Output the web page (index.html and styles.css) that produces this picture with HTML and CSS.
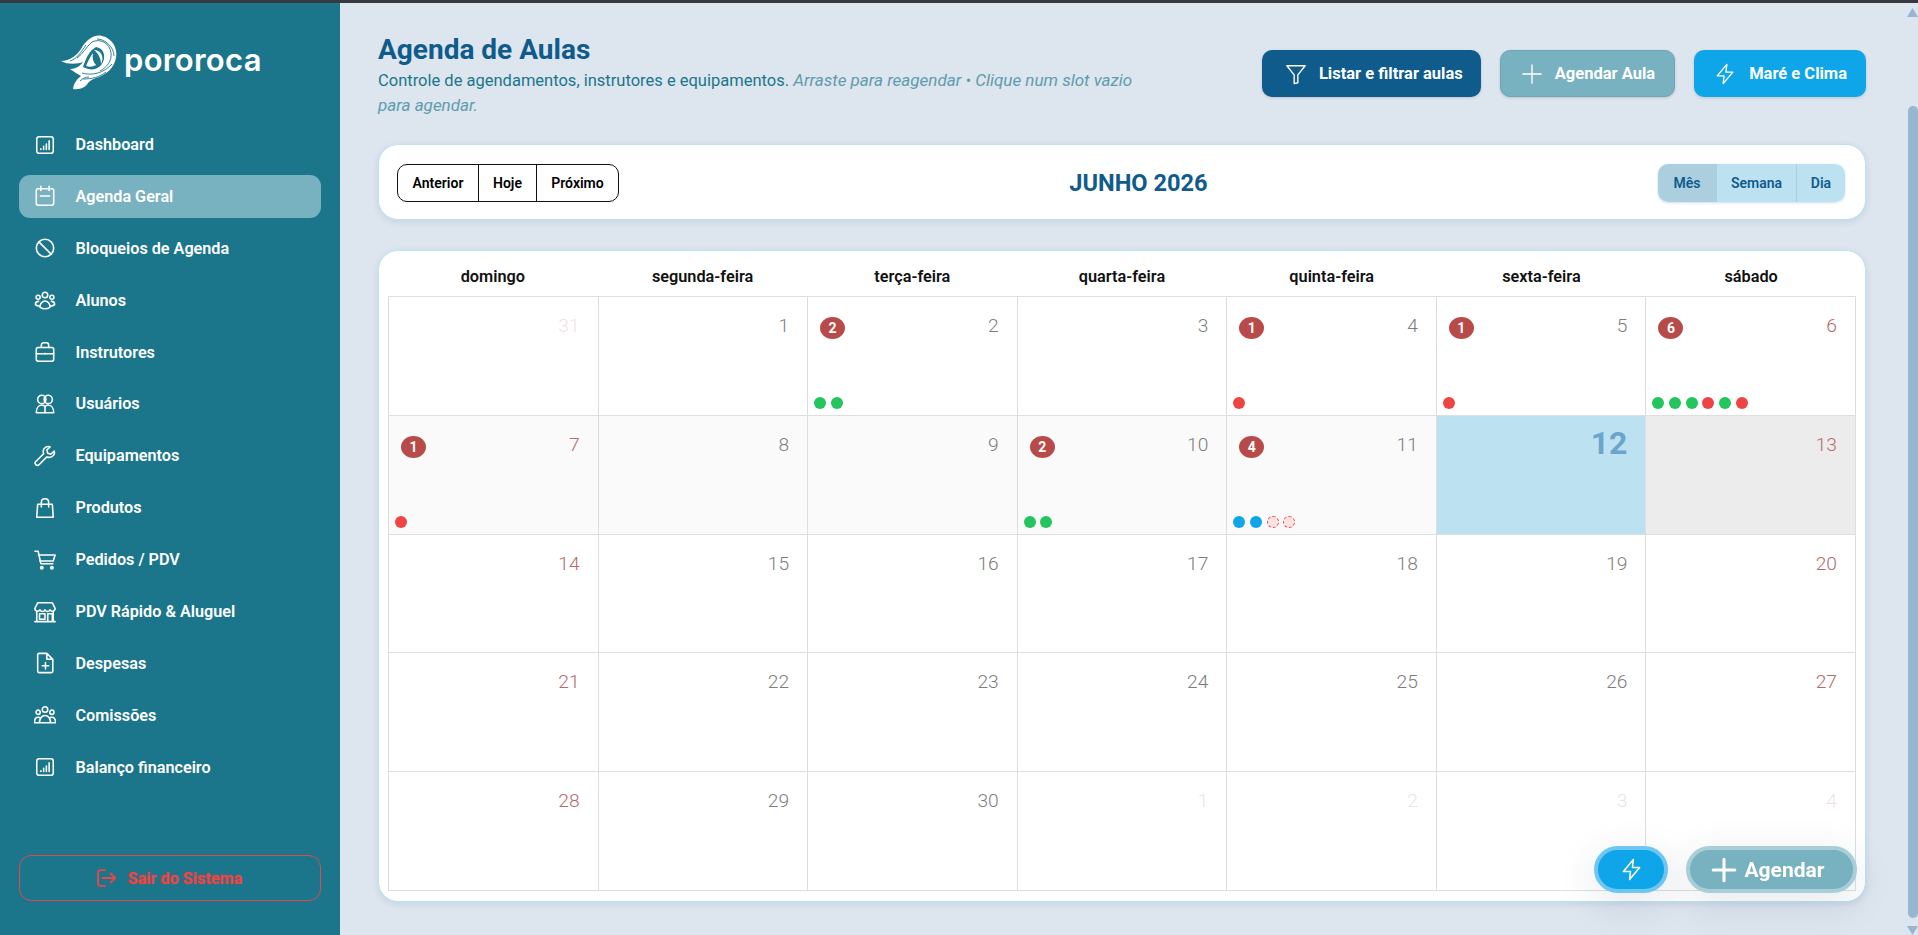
FILE: index.html
```html
<!DOCTYPE html>
<html>
<head>
  <meta charset="UTF-8">
  <title>Agenda de Aulas</title>
  <link rel="stylesheet" href="styles.css">
</head>
<body>
  <div class="top-line"></div>
  <div class="app">
    <aside class="sidebar">
      <div class="logo">
        <svg class="logo-mark" viewBox="0 0 90 75">
          <path d="M11 36C20 36 27 30 31 24C36 15 44 9 52 11C62 13 68 23 66 33C64 43 56 50 46 53C42 54 40 56 38 58C36 62 30 65 23 64C24 58 27 54 31 51C28 49 24 47 20 44C26 44 30 41 33 37C28 39 18 40 11 36Z"/>
          <path class="logo-cut" d="M33 42C36 33 39 26 46 22C53 23 56 30 53 37C51 41 48 43 45 44C41 45 37 44 33 42Z"/>
          <path d="M36 41C38 36 40 32 43 28C42 33 43 37 46 40C43 42 39 42 36 41Z"/>
          <path d="M44 25C50 25 55 31 51 39C51 34 49 29 44 25Z"/>
          <path class="logo-line" d="M42 17C50 13 60 18 61 28C62 36 57 42 50 46"/>
          <path class="logo-line" d="M47 14C55 14 64 22 64 31"/>
          <path class="logo-line" d="M27 33C33 29 36 22 42 17"/>
          <path class="logo-line" d="M20 36C27 34 31 27 36 20"/>
          <path class="logo-line" d="M32 48C42 51 54 48 62 39"/>
          <path class="logo-line" d="M33 54C42 54 50 52 56 47"/>
          <path class="logo-line" d="M30 56C33 53 36 52 39 52"/>
        </svg>
        <span class="logo-text">pororoca</span>
      </div>

      <nav class="nav">
        <a class="nav-item">
          <svg class="nav-icon" viewBox="0 0 24 24"><rect x="3" y="3" width="18" height="18" rx="2.5"/><path d="M7.500 17v-1M10.500 17v-3.500M13.500 17v-6M16.500 17V7.500"/></svg>
          Dashboard
        </a>
        <a class="nav-item active">
          <svg class="nav-icon" viewBox="0 0 24 24"><rect x="2.500" y="4" width="19" height="18" rx="2"/><path d="M7.500 1.500V6M16.500 1.500V6M7 12h10"/></svg>
          Agenda Geral
        </a>
        <a class="nav-item">
          <svg class="nav-icon" viewBox="0 0 24 24"><circle cx="12" cy="12" r="9.500"/><path d="M5.300 5.300l13.400 13.400"/></svg>
          Bloqueios de Agenda
        </a>
        <a class="nav-item">
          <svg class="nav-icon" viewBox="0 0 24 24"><circle cx="12" cy="6.500" r="3"/><circle cx="4.500" cy="9" r="2.200"/><circle cx="19.500" cy="9" r="2.200"/><path d="M6.500 20c0-4 2.500-7 5.500-7s5.500 3 5.500 7c-3.500 2-7.500 2-11 0z"/><path d="M5 13.500c-2 0-3.500 1.500-3.500 3.500 1 1 2.500 1.500 4 1.500M19 13.500c2 0 3.500 1.500 3.500 3.500-1 1-2.500 1.500-4 1.500"/></svg>
          Alunos
        </a>
        <a class="nav-item">
          <svg class="nav-icon" viewBox="0 0 24 24"><rect x="2.500" y="7" width="19" height="15" rx="2"/><path d="M8 7V4.500C8 3 9 2 10.500 2h3C15 2 16 3 16 4.500V7M2.500 14h19M12 13.500v1"/></svg>
          Instrutores
        </a>
        <a class="nav-item">
          <svg class="nav-icon" viewBox="0 0 24 24"><circle cx="8.500" cy="7" r="4.500"/><circle cx="15.500" cy="7" r="4.500"/><path d="M2.500 21.500c0-5 2.500-8.500 6-8.500 2 0 3.500 1 3.500 3 0-2 1.500-3 3.500-3 3.500 0 6 3.500 6 8.500zM12 16v5.500"/></svg>
          Usuários
        </a>
        <a class="nav-item">
          <svg class="nav-icon" viewBox="0 0 24 24"><path d="M22 6.500l-3.500 3.500-3.500-1-1-3.500L17.500 2C14 .8 10 3 10 7c0 1 .2 1.800.5 2.500L2 18c-1 1-1 2.500 0 3.500s2.500 1 3.500 0l8.500-8.500c.8.300 1.600.5 2.500.5 4 0 6.800-3.500 5.500-7z"/></svg>
          Equipamentos
        </a>
        <a class="nav-item">
          <svg class="nav-icon" viewBox="0 0 24 24"><path d="M4 8h16l1 14H3zM8 11V6c0-2.500 1.500-4 4-4s4 1.500 4 4v5"/></svg>
          Produtos
        </a>
        <a class="nav-item">
          <svg class="nav-icon" viewBox="0 0 24 24"><path d="M1 2.500h3.500L7.500 16h13M5 6.500h18L21 13H6.300"/><circle cx="8.500" cy="20.500" r="1.300"/><circle cx="19.500" cy="20.500" r="1.300"/></svg>
          Pedidos / PDV
        </a>
        <a class="nav-item">
          <svg class="nav-icon" viewBox="0 0 24 24"><path d="M1 22.500h22M3 22.500V12M21 22.500V12M4 2h16l3 6c0 4-4.500 4-5.500 1.500C16.500 12 13 12 12 9.500 11 12 7.500 12 6.500 9.500 5.500 12 1 12 1 8z"/><rect x="6" y="14" width="6" height="6"/><path d="M15 22V14h5v8"/></svg>
          PDV Rápido &amp; Aluguel
        </a>
        <a class="nav-item">
          <svg class="nav-icon" viewBox="0 0 24 24"><path d="M5.500 1.500H14L20.500 8v13c0 1-.8 1.500-1.500 1.500H5.500C4.700 22.500 4 22 4 21V3c0-1 .7-1.500 1.500-1.500zM14 1.500V8h6.500M12.500 11.500v7M9 15h7"/></svg>
          Despesas
        </a>
        <a class="nav-item">
          <svg class="nav-icon" viewBox="0 0 24 24"><circle cx="12" cy="6" r="3"/><circle cx="4.500" cy="9" r="2.300"/><circle cx="19.500" cy="9" r="2.300"/><path d="M6 20.500c0-4.500 2.500-8 6-8s6 3.500 6 8M.5 20.500c0-3.500 1.500-6 4-6 1 0 2 .3 2.500 1M23.500 20.500c0-3.500-1.500-6-4-6-1 0-2 .3-2.500 1M.5 20.500h23"/></svg>
          Comissões
        </a>
        <a class="nav-item">
          <svg class="nav-icon" viewBox="0 0 24 24"><rect x="3" y="3" width="18" height="18" rx="2.500"/><path d="M7.500 17v-1M10.500 17v-3.500M13.500 17v-6M16.500 17V7.500"/></svg>
          Balanço financeiro
        </a>
      </nav>

      <a class="logout">
        <svg class="logout-icon" viewBox="0 0 24 24"><path d="M11 2.500H5C3.500 2.500 2.500 3.500 2.500 5v14c0 1.500 1 2.500 2.500 2.500h6M8 12h15M17.500 6.500L23 12l-5.500 5.500"/></svg>
        Sair do Sistema
      </a>
    </aside>

    <main class="main">
      <header class="page-header">
        <div class="page-title">
          <h1>Agenda de Aulas</h1>
          <p>Controle de agendamentos, instrutores e equipamentos. <em>Arraste para reagendar • Clique num slot vazio para agendar.</em></p>
        </div>
        <div class="page-actions">
          <button class="action-btn btn-list">
            <svg class="btn-icon" viewBox="0 0 24 24"><path d="M2 3h20l-8 10v8.500l-4 1V13z"/></svg>
            Listar e filtrar aulas
          </button>
          <button class="action-btn btn-new">
            <svg class="btn-icon" viewBox="0 0 24 24"><path d="M12 2v20M2 12h20"/></svg>
            Agendar Aula
          </button>
          <button class="action-btn btn-tide">
            <svg class="btn-icon" viewBox="0 0 24 24"><path d="M14 1.500L3.500 14H11l-1 8.500L20.500 10H13z"/></svg>
            Maré e Clima
          </button>
        </div>
      </header>

      <section class="toolbar">
        <div class="btn-group nav-group">
          <button class="anterior">Anterior</button>
          <button class="hoje">Hoje</button>
          <button class="proximo">Próximo</button>
        </div>
        <h2 class="month-title">JUNHO 2026</h2>
        <div class="btn-group view-group">
          <button class="view-mes">Mês</button>
          <button class="view-semana">Semana</button>
          <button class="view-dia">Dia</button>
        </div>
      </section>

      <section class="calendar">
        <div class="week-head">
          <div>domingo</div>
          <div>segunda-feira</div>
          <div>terça-feira</div>
          <div>quarta-feira</div>
          <div>quinta-feira</div>
          <div>sexta-feira</div>
          <div>sábado</div>
        </div>
        <div class="month-grid">
          <div class="day weekend off"><div class="day-top"><span></span><span class="num">31</span></div></div>
          <div class="day"><div class="day-top"><span></span><span class="num">1</span></div></div>
          <div class="day">
            <div class="day-top"><span class="badge">2</span><span class="num">2</span></div>
            <div class="dots"><i class="dot green"></i><i class="dot green"></i></div>
          </div>
          <div class="day"><div class="day-top"><span></span><span class="num">3</span></div></div>
          <div class="day">
            <div class="day-top"><span class="badge">1</span><span class="num">4</span></div>
            <div class="dots"><i class="dot red"></i></div>
          </div>
          <div class="day">
            <div class="day-top"><span class="badge">1</span><span class="num">5</span></div>
            <div class="dots"><i class="dot red"></i></div>
          </div>
          <div class="day weekend">
            <div class="day-top"><span class="badge">6</span><span class="num">6</span></div>
            <div class="dots"><i class="dot green"></i><i class="dot green"></i><i class="dot green"></i><i class="dot red"></i><i class="dot green"></i><i class="dot red"></i></div>
          </div>

          <div class="day weekend past">
            <div class="day-top"><span class="badge">1</span><span class="num">7</span></div>
            <div class="dots"><i class="dot red"></i></div>
          </div>
          <div class="day past"><div class="day-top"><span></span><span class="num">8</span></div></div>
          <div class="day past"><div class="day-top"><span></span><span class="num">9</span></div></div>
          <div class="day past">
            <div class="day-top"><span class="badge">2</span><span class="num">10</span></div>
            <div class="dots"><i class="dot green"></i><i class="dot green"></i></div>
          </div>
          <div class="day past">
            <div class="day-top"><span class="badge">4</span><span class="num">11</span></div>
            <div class="dots"><i class="dot blue"></i><i class="dot blue"></i><i class="dot canceled"></i><i class="dot canceled"></i></div>
          </div>
          <div class="day today"><div class="day-top"><span></span><span class="num">12</span></div></div>
          <div class="day weekend closed"><div class="day-top"><span></span><span class="num">13</span></div></div>

          <div class="day weekend"><div class="day-top"><span></span><span class="num">14</span></div></div>
          <div class="day"><div class="day-top"><span></span><span class="num">15</span></div></div>
          <div class="day"><div class="day-top"><span></span><span class="num">16</span></div></div>
          <div class="day"><div class="day-top"><span></span><span class="num">17</span></div></div>
          <div class="day"><div class="day-top"><span></span><span class="num">18</span></div></div>
          <div class="day"><div class="day-top"><span></span><span class="num">19</span></div></div>
          <div class="day weekend"><div class="day-top"><span></span><span class="num">20</span></div></div>

          <div class="day weekend"><div class="day-top"><span></span><span class="num">21</span></div></div>
          <div class="day"><div class="day-top"><span></span><span class="num">22</span></div></div>
          <div class="day"><div class="day-top"><span></span><span class="num">23</span></div></div>
          <div class="day"><div class="day-top"><span></span><span class="num">24</span></div></div>
          <div class="day"><div class="day-top"><span></span><span class="num">25</span></div></div>
          <div class="day"><div class="day-top"><span></span><span class="num">26</span></div></div>
          <div class="day weekend"><div class="day-top"><span></span><span class="num">27</span></div></div>

          <div class="day weekend"><div class="day-top"><span></span><span class="num">28</span></div></div>
          <div class="day"><div class="day-top"><span></span><span class="num">29</span></div></div>
          <div class="day"><div class="day-top"><span></span><span class="num">30</span></div></div>
          <div class="day off"><div class="day-top"><span></span><span class="num">1</span></div></div>
          <div class="day off"><div class="day-top"><span></span><span class="num">2</span></div></div>
          <div class="day off"><div class="day-top"><span></span><span class="num">3</span></div></div>
          <div class="day weekend off"><div class="day-top"><span></span><span class="num">4</span></div></div>
        </div>
      </section>
    </main>

    <div class="scrollbar">
      <div class="arrow-up"></div>
      <div class="thumb"></div>
      <div class="arrow-down"></div>
    </div>
  </div>

  <div class="fab-row">
    <button class="fab fab-tide">
      <svg class="fab-bolt" viewBox="0 0 24 24"><path d="M14 1.500L3.500 14H11l-1 8.500L20.500 10H13z"/></svg>
    </button>
    <button class="fab fab-new">
      <svg class="fab-plus" viewBox="0 0 24 24"><path d="M12 2v20M2 12h20"/></svg>
      Agendar
    </button>
  </div>
</body>
</html>
```

FILE: styles.css
```css
* {
  box-sizing: border-box;
}

html, body {
  height: 100%;
}

body {
  margin: 0;
  font-family: Roboto, Arial, sans-serif;
  background-color: #dde5ee;
  color: #000;
  overflow: hidden;
}

button {
  font-family: inherit;
  cursor: pointer;
}

.top-line {
  height: 3px;
  background-color: #36393f;
}

.app {
  display: flex;
  height: calc(100vh - 3px);
}

/* Sidebar */
.sidebar {
  width: 340px;
  flex-shrink: 0;
  display: flex;
  flex-direction: column;
  background-color: #1b768c;
  color: #fff;
  padding: 0 19px 34px;
}

.logo {
  display: flex;
  align-items: flex-start;
  height: 120px;
  padding: 22px 0 0 31px;
}

.logo-mark {
  width: 90px;
  height: 75px;
  fill: #fff;
  margin-right: -16px;
}

.logo-cut {
  fill: #1b768c;
}

.logo-line {
  fill: none;
  stroke: #1b768c;
  stroke-width: 0.9;
}

.logo-text {
  font-family: Inter, Arial, sans-serif;
  font-weight: 600;
  font-size: 31px;
  letter-spacing: 0.3px;
  line-height: 36px;
  margin-top: 17px;
}

.nav {
  display: flex;
  flex-direction: column;
  gap: 8.900px;
}

.nav-item {
  display: flex;
  align-items: center;
  gap: 19.500px;
  height: 43px;
  padding-left: 15px;
  border-radius: 11px;
  font-size: 16.200px;
  font-weight: 600;
}

.nav-item.active {
  background-color: #78b1bf;
}

.nav-icon {
  width: 22px;
  height: 22px;
  flex-shrink: 0;
  fill: none;
  stroke: #fff;
  stroke-width: 1.700;
  stroke-linecap: round;
  stroke-linejoin: round;
}

.logout {
  margin-top: auto;
  display: flex;
  align-items: center;
  justify-content: center;
  gap: 12px;
  height: 46px;
  padding-right: 2px;
  border: 1px solid #dc4a4e;
  border-radius: 12px;
  color: #ef4444;
  font-size: 16.200px;
  font-weight: 700;
  text-shadow: 0 0 2px rgba(239, 68, 68, 0.5);
}

.logout-icon {
  width: 20px;
  height: 20px;
  fill: none;
  stroke: #ef4444;
  stroke-width: 2.200;
  stroke-linecap: round;
  stroke-linejoin: round;
}

/* Main area */
.main {
  flex: 1;
  min-width: 0;
  padding: 31px 41px 0 38px;
  overflow: hidden;
}

.page-header {
  display: flex;
  justify-content: space-between;
  height: 110px;
}

.page-title {
  width: 770px;
}

.page-title h1 {
  margin: 0 0 2px;
  font-size: 28px;
  font-weight: 700;
  line-height: 32px;
  color: #0e5b8c;
}

.page-title p {
  margin: 0;
  font-size: 16.500px;
  line-height: 24px;
  color: #1b768c;
}

.page-title em {
  font-size: 17px;
  color: #5d9cad;
}

.page-actions {
  display: flex;
  gap: 19px;
  padding-top: 16px;
}

.action-btn {
  display: flex;
  align-items: center;
  height: 47px;
  border: none;
  border-radius: 10px;
  padding: 0 19px 0 20px;
  gap: 12px;
  color: #fff;
  font-size: 16.500px;
  font-weight: 700;
  box-shadow: 0 1px 3px rgba(0, 0, 0, 0.15);
}

.btn-icon {
  width: 22px;
  height: 22px;
  fill: none;
  stroke: #fff;
  stroke-width: 1.500;
  stroke-linejoin: round;
  stroke-linecap: round;
}

.btn-list {
  background-color: #0e5b8c;
  padding: 0 18px 0 23px;
}

.btn-new {
  background-color: #78b1bf;
  border: 1px solid #6fa6b4;
}

.btn-tide {
  background-color: #0ea5e9;
  gap: 13px;
}

.toolbar {
  display: flex;
  align-items: center;
  justify-content: space-between;
  height: 76px;
  padding: 2px 20px 0 18px;
  background-color: #fff;
  border: 1px solid #bde3f2;
  border-radius: 20px;
  box-shadow: 0 2px 6px rgba(14, 91, 140, 0.12);
}

.btn-group {
  display: flex;
  height: 38px;
  border-radius: 10px;
  overflow: hidden;
}

.btn-group button {
  border: none;
  height: 100%;
  background: none;
  font-size: 14px;
  font-weight: 600;
  padding: 0;
}

.nav-group {
  border: 1px solid #111;
}

.nav-group button {
  color: #000;
  border-left: 1px solid #111;
}

.nav-group .anterior {
  border-left: none;
  width: 80px;
}

.nav-group .hoje {
  width: 58px;
}

.nav-group .proximo {
  width: 82px;
}

.month-title {
  margin: 0;
  font-size: 23.600px;
  font-weight: 700;
  color: #0e5b8c;
}

.view-group {
  box-shadow: 0 1px 3px rgba(14, 91, 140, 0.2);
}

.view-group button {
  background-color: #bce2f2;
  color: #0e5b8c;
  border-left: 1px solid #a6d0e0;
}

.view-group .view-mes {
  border-left: none;
  width: 58px;
  background-color: #abcfdf;
}

.view-group .view-semana {
  width: 80px;
}

.view-group .view-dia {
  width: 49px;
}

/* Calendar */
.calendar {
  margin-top: 30px;
  padding: 0 9px 10px;
  background-color: #fff;
  border: 1px solid #bde3f2;
  border-radius: 20px;
  box-shadow: 0 2px 6px rgba(14, 91, 140, 0.12);
}

.week-head {
  display: grid;
  grid-template-columns: repeat(7, 1fr);
  height: 45px;
  padding-top: 6px;
  align-items: center;
  text-align: center;
  font-size: 16.300px;
  font-weight: 600;
  color: #111;
}

.month-grid {
  display: grid;
  grid-template-columns: repeat(7, 1fr);
  grid-auto-rows: 118.800px;
  border-top: 1px solid #dedede;
  border-left: 1px solid #dedede;
}

.day {
  display: flex;
  flex-direction: column;
  padding: 6px;
  border-right: 1px solid #dedede;
  border-bottom: 1px solid #dedede;
}

.day-top {
  display: flex;
  justify-content: space-between;
  align-items: flex-start;
  padding: 11px 12px 0 6px;
}

.num {
  font-size: 19.200px;
  font-weight: 300;
  line-height: 24px;
  color: #7d7d7d;
}

.weekend .num {
  color: #b56a6a;
}

.off .num {
  opacity: 0.2;
}

.badge {
  width: 25px;
  height: 22px;
  margin-top: 3px;
  border-radius: 50%;
  background-color: #b84a4a;
  color: #fff;
  font-size: 14px;
  font-weight: 700;
  line-height: 22px;
  text-align: center;
}

.dots {
  margin-top: auto;
  display: flex;
  gap: 4.700px;
}

.dot {
  width: 12px;
  height: 12px;
  border-radius: 50%;
}

.green {
  background-color: #22c55e;
}

.red {
  background-color: #ef4444;
}

.blue {
  background-color: #0ea5e9;
}

.canceled {
  background-color: #fbe3e3;
  border: 1px dashed #ef4444;
}

.past {
  background-color: #fafafa;
}

.today {
  background-color: #bce2f2;
}

.today .day-top {
  padding-top: 0;
}

.today .num {
  font-size: 32px;
  font-weight: 700;
  line-height: 43px;
  color: #6ba5c9;
}

.closed {
  background-color: #ececec;
}

/* Scrollbar drawn as a column so the page keeps its scrolled look */
.scrollbar {
  width: 11px;
  flex-shrink: 0;
  display: flex;
  flex-direction: column;
}

.arrow-up, .arrow-down {
  height: 9px;
  background-color: #97b6cf;
}

.arrow-up {
  margin-top: 5px;
  clip-path: polygon(50% 0, 100% 100%, 0 100%);
}

.arrow-down {
  margin-top: auto;
  clip-path: polygon(0 0, 100% 0, 50% 100%);
}

.thumb {
  height: 812px;
  margin: 89px 0 0 1px;
  background-color: #97b6cf;
  border-radius: 5px;
}

/* Floating buttons */
.fab-row {
  position: fixed;
  right: 61px;
  bottom: 42px;
  display: flex;
  gap: 18px;
}

.fab {
  display: flex;
  align-items: center;
  justify-content: center;
  height: 47px;
  border-radius: 24px;
  color: #fff;
  font-size: 21px;
  font-weight: 700;
  box-shadow: 0 10px 40px rgba(30, 60, 90, 0.12);
}

.fab-tide {
  width: 74px;
  background-color: #0ea5e9;
  border: 4px solid #6ec6f3;
}

.fab-new {
  width: 171px;
  gap: 8px;
  padding: 0 8px 0 0;
  background-color: #78b1bf;
  border: 4px solid #a8cfd9;
}

.fab-bolt {
  width: 23px;
  height: 23px;
  fill: none;
  stroke: #fff;
  stroke-width: 1.600;
  stroke-linejoin: round;
}

.fab-plus {
  width: 26px;
  height: 26px;
  fill: none;
  stroke: #fff;
  stroke-width: 2.800;
  stroke-linecap: round;
}
```
